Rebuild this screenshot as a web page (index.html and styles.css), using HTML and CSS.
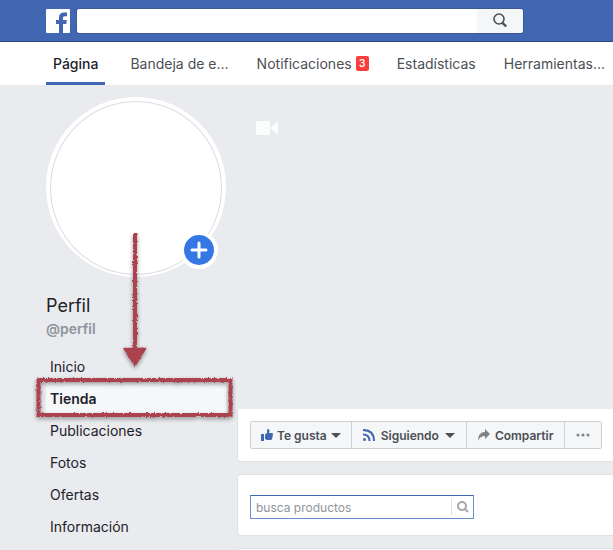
FILE: index.html
```html
<!DOCTYPE html>
<html lang="es">
<head>
    <meta charset="UTF-8">
    <meta name="viewport" content="width=device-width, initial-scale=1.0">
    <title>Perfil</title>
    <link rel="stylesheet" href="styles.css">
</head>
<body>
    <header class="top-bar">
        <a href="#" class="logo" aria-label="Inicio">
            <svg viewBox="0 0 24 24" width="24" height="24">
                <rect width="24" height="24" rx="1" fill="#fff"/>
                <path d="M13 24v-9h-3v-4h3V8.500C13 5.300 15 3.500 18 3.500h3v3.700h-2c-1.600 0-2 .7-2 1.900V11h3.800l-.5 4H17v9z" fill="#4267b2"/>
            </svg>
        </a>
        <form class="search">
            <input type="text" aria-label="Buscar">
            <button type="button" aria-label="Buscar">
                <svg viewBox="0 0 16 16" width="16" height="16" fill="none" stroke="#4b4f56">
                    <circle cx="7" cy="6" r="5" stroke-width="1.600"/>
                    <path d="M10.500 9.800l3.700 3.700" stroke-width="2.400"/>
                </svg>
            </button>
        </form>
    </header>

    <nav class="tabs">
        <a href="#" class="active">Página</a>
        <a href="#">Bandeja de e...</a>
        <a href="#">Notificaciones<span class="count">3</span></a>
        <a href="#">Estadísticas</a>
        <a href="#">Herramientas...</a>
    </nav>

    <div class="page">
        <aside class="sidebar">
            <div class="avatar">
                <button type="button" class="add" aria-label="Agregar foto">
                    <svg viewBox="0 0 18 18" width="18" height="18" stroke="#fff" stroke-width="3" stroke-linecap="round">
                        <path d="M9 2v14M2 9h14"/>
                    </svg>
                </button>
            </div>
            <h1>Perfil</h1>
            <p class="handle">@perfil</p>
            <ul class="menu">
                <li><a href="#">Inicio</a></li>
                <li><a href="#" class="selected">Tienda</a></li>
                <li><a href="#">Publicaciones</a></li>
                <li><a href="#">Fotos</a></li>
                <li><a href="#">Ofertas</a></li>
                <li><a href="#">Información</a></li>
            </ul>
            <!-- hand drawn arrow and box around the shop link -->
            <svg class="marker" viewBox="0 0 206 200" width="206" height="200">
                <defs>
                    <filter id="rough" x="-10%" y="-10%" width="120%" height="120%">
                        <feTurbulence type="fractalNoise" baseFrequency="0.550" numOctaves="2" seed="4" result="noise"/>
                        <feDisplacementMap in="SourceGraphic" in2="noise" scale="3" xChannelSelector="R" yChannelSelector="G"/>
                    </filter>
                </defs>
                <g class="ink">
                    <g filter="url(#rough)">
                        <path d="M105 6v120" stroke-width="4"/>
                        <path d="M94 121.500h21.500l-10.500 17z" stroke-width="1.500" stroke-linejoin="round" class="head"/>
                        <rect x="8.500" y="153" width="192" height="35" stroke-width="4"/>
                    </g>
                </g>
            </svg>
        </aside>

        <main class="content">
            <div class="cover">
                <svg viewBox="0 0 22 14" width="22" height="14" fill="#fff">
                    <rect width="14" height="14" rx="2"/>
                    <path d="M15 7l4-5q3-2 3 1v8q0 3-3 1z"/>
                </svg>
            </div>
            <section class="card actions">
                <div class="button-group">
                    <button type="button" class="like">
                        <svg viewBox="0 0 12 12" width="12" height="12" fill="#4267b2">
                            <path d="M0 5h3v7H0zM4 5.500L6 4V1q0-1 1-1 1.500 0 1.500 2L8 4h3q1 0 1 1.200 0 .8-.5 1.300.5.700 0 1.500.2.900-.5 1.500 0 1.500-1.500 1.500H6l-2-1z"/>
                        </svg>
                        Te gusta
                        <span class="caret"></span>
                    </button>
                    <button type="button" class="follow">
                        <svg viewBox="0 0 12 12" width="12" height="12" fill="none" stroke="#4267b2" stroke-width="2">
                            <path d="M0 1q11 0 11 11M0 5.500q6.500 0 6.500 6.500"/>
                            <circle cx="1.500" cy="10.500" r="1.500" fill="#4267b2" stroke="none"/>
                        </svg>
                        Siguiendo
                        <span class="caret"></span>
                    </button>
                    <button type="button" class="share">
                        <svg viewBox="0 0 12 12" width="12" height="12" fill="#7f8389">
                            <path d="M7 0l5 5-5 5V7Q2 7 0 12 0 3 7 3z"/>
                        </svg>
                        Compartir
                    </button>
                    <button type="button" class="more" aria-label="Más">
                        <svg viewBox="0 0 14 4" width="14" height="4" fill="#7f8389">
                            <circle cx="2" cy="2" r="1.500"/>
                            <circle cx="7" cy="2" r="1.500"/>
                            <circle cx="12" cy="2" r="1.500"/>
                        </svg>
                    </button>
                </div>
            </section>
            <section class="card shop">
                <form class="product-search">
                    <input type="text" placeholder="busca productos" aria-label="busca productos">
                    <button type="button" aria-label="Buscar productos">
                        <svg viewBox="0 0 12 12" width="12" height="12" fill="none" stroke="#a3a6ab" stroke-width="2">
                            <circle cx="5" cy="5" r="4"/>
                            <path d="M8 8l3 3"/>
                        </svg>
                    </button>
                </form>
            </section>
            <section class="card"></section>
        </main>
    </div>
</body>
</html>
```

FILE: styles.css
```css
* {
    box-sizing: border-box;
}

body {
    margin: 0;
    height: 100vh;
    overflow: hidden;
    display: flex;
    flex-direction: column;
    background-color: #e9ebee;
    color: #1d2129;
    font-family: Inter, "Liberation Sans", sans-serif;
    font-size: 14px;
}

a {
    color: inherit;
    text-decoration: none;
}

svg {
    display: block;
    flex-shrink: 0;
}

button {
    font-family: inherit;
    cursor: pointer;
}

.top-bar {
    display: flex;
    align-items: center;
    gap: 7px;
    flex-shrink: 0;
    height: 42px;
    padding: 0 46px;
    background-color: #4267b2;
    border-bottom: 1px solid #29487d;
}

.search {
    display: flex;
    flex: 1;
    max-width: 446px;
    height: 24px;
    border-radius: 2px;
    overflow: hidden;
    box-shadow: 0 0 0 1px #3b5998;
}

.search input {
    flex: 1;
    min-width: 0;
    padding: 0 8px;
    border: none;
    background-color: #fff;
}

.search button {
    display: flex;
    align-items: center;
    justify-content: center;
    width: 46px;
    padding: 0;
    border: none;
    background-color: #f5f6f7;
}

.tabs {
    display: flex;
    flex-shrink: 0;
    gap: 14px;
    height: 43px;
    padding-left: 46px;
    background-color: #fff;
    color: #4b4f56;
    white-space: nowrap;
}

.tabs a {
    display: flex;
    align-items: center;
    padding: 3px 7px 0;
    border-bottom: 3px solid transparent;
}

.tabs .active {
    margin-right: 4px;
    color: #1d2129;
    font-weight: 500;
    border-bottom-color: #4267b2;
}

.count {
    margin-left: 4px;
    width: 13px;
    border-radius: 2px;
    background-color: #fa3e3e;
    color: #fff;
    font-size: 10px;
    font-weight: 600;
    line-height: 15px;
    text-align: center;
}

.page {
    display: flex;
    flex: 1;
    gap: 11px;
    padding-left: 46px;
}

.sidebar {
    position: relative;
    flex-shrink: 0;
    width: 180px;
    padding-top: 12px;
}

.avatar {
    position: relative;
    height: 180px;
    padding: 4px;
    border-radius: 50%;
    background-color: #fff;
}

.avatar::before {
    content: "";
    display: block;
    height: 100%;
    border: 1px solid #dadce0;
    border-radius: 50%;
}

.add {
    position: absolute;
    right: 8px;
    bottom: 8px;
    display: flex;
    align-items: center;
    justify-content: center;
    width: 38px;
    height: 38px;
    padding: 0;
    border: 4px solid #fff;
    border-radius: 50%;
    background-color: #3578e5;
}

h1 {
    margin: 17px 0 0;
    font-size: 18px;
    font-weight: 400;
    line-height: 24px;
}

.handle {
    margin: 1px 0 12px;
    color: #90949c;
    font-weight: 600;
    line-height: 20px;
}

.menu {
    margin: 0;
    padding: 0;
    list-style: none;
}

.menu a {
    display: block;
    padding-left: 4px;
    line-height: 32px;
}

.menu .selected {
    background-color: #f6f7f9;
    font-weight: 600;
}

.marker {
    position: absolute;
    left: -16px;
    top: 142px;
    pointer-events: none;
}

.ink {
    fill: none;
    stroke: #ab424d;
    filter: drop-shadow(0 2px 2px rgba(0, 0, 0, 0.4));
}

.ink .head {
    fill: #ab424d;
}

.content {
    display: flex;
    flex: 1;
    flex-direction: column;
    gap: 12px;
    min-width: 0;
}

.cover {
    height: 312px;
    padding: 36px 19px;
    opacity: 0.9;
}

.card {
    flex-shrink: 0;
    padding: 12px;
    min-height: 52px;
    background-color: #fff;
    border: 1px solid #dddfe2;
    border-right: none;
    border-radius: 4px 0 0 4px;
}

.actions {
    border-top: none;
    border-radius: 0 0 0 4px;
}

.button-group {
    display: flex;
    width: max-content;
    border: 1px solid #ccd0d5;
    border-radius: 2px;
}

.button-group button {
    display: flex;
    align-items: center;
    gap: 4px;
    height: 26px;
    padding: 0 10px;
    border: none;
    border-right: 1px solid #ccd0d5;
    background-color: #f5f6f7;
    color: #4b4f56;
    font-size: 12px;
    font-weight: 600;
}

.button-group .follow {
    gap: 6px;
    padding: 0 11px;
}

.button-group .share {
    gap: 5px;
}

.button-group .share,
.button-group .more {
    padding: 0 11px;
}

.button-group .more {
    border-right: none;
}

.caret {
    border-top: 5px solid #4b4f56;
    border-left: 5px solid transparent;
    border-right: 5px solid transparent;
}

.shop {
    padding: 20px 12px 16px;
}

.product-search {
    display: flex;
    align-items: center;
    max-width: 224px;
    height: 24px;
    border: 1px solid #6d8fcb;
    border-top-color: #4267b2;
}

.product-search input {
    flex: 1;
    min-width: 0;
    padding: 0 5px;
    border: none;
    outline: none;
    font-family: inherit;
    font-size: 12px;
}

.product-search input::placeholder {
    color: #90949c;
}

.product-search button {
    display: flex;
    align-items: center;
    justify-content: center;
    width: 22px;
    height: 16px;
    padding: 0;
    border: none;
    border-left: 1px solid #dddfe2;
    background: none;
}
```
